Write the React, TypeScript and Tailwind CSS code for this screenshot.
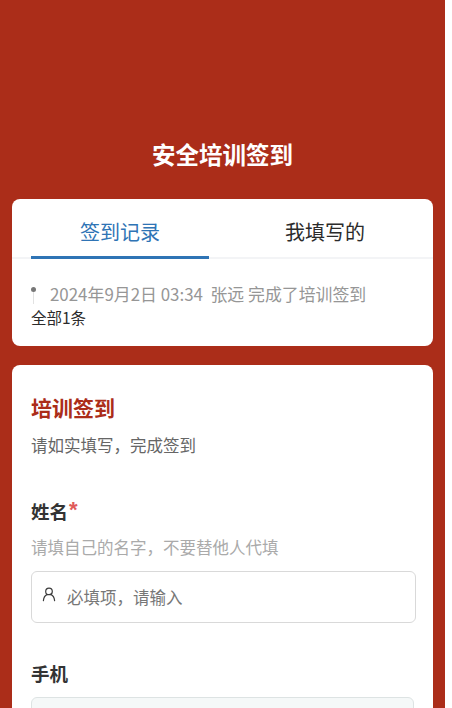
import React from "react";

const font = { fontFamily: '"Noto Sans CJK SC", "Noto Sans", sans-serif' };

function UserIcon() {
  return (
    <svg width="14" height="15" viewBox="0 0 14 15" fill="none" stroke="#3c3c3c" strokeWidth="1.2" strokeLinecap="round">
      <circle cx="7" cy="4.4" r="3.3" />
      <path d="M1.4 13.6c.3-3.2 2-5.4 3.6-6M12.6 13.6c-.3-3.2-2-5.4-3.6-6" />
    </svg>
  );
}

export default function App() {
  return (
    <div className="h-[708px] w-[452px] overflow-hidden bg-white" style={font}>
      <div className="flex h-[708px] w-[445px] flex-col overflow-hidden bg-[#ab2d19] px-3 pt-[136px]">
        <h1 className="h-[36px] text-center text-[23.5px] font-bold leading-[36px] text-white">安全培训签到</h1>

        <section className="mt-[27px] h-[147px] shrink-0 rounded-lg bg-white">
          <div className="flex h-[60px] border-b-2 border-[#f3f4f6] px-[19px]">
            <div className="-mb-[2px] h-[60px] w-[178px] border-b-[3px] border-[#2f74b5] text-center text-[20px] leading-[66px] text-[#2f74b5]">签到记录</div>
            <div className="w-[204px] pl-[28px] text-center text-[20px] leading-[66px] text-[#2b2b2b]">我填写的</div>
          </div>
          <div className="px-[19px] pt-[23px]">
            <div className="flex h-[24px] items-start">
              <div className="relative h-[22px] w-[19px] shrink-0">
                <span className="absolute left-0 top-[5px] h-[5px] w-[5px] rounded-full bg-[#777777]" />
                <span className="absolute left-[2px] top-[10px] h-[12px] w-px bg-[#e2e2e2]" />
              </div>
              <p className="text-[16.9px] leading-[24px] text-[#969696] whitespace-pre">2024年9月2日 03:34  张远 完成了培训签到</p>
            </div>
            <p className="text-[15.5px] leading-[22px] text-[#2b2b2b]">全部1条</p>
          </div>
        </section>

        <section className="mt-[19px] flex-1 rounded-lg bg-white px-[19px] pt-[27px]">
          <h2 className="text-[21px] font-bold leading-[30px] text-[#ab2d19]">培训签到</h2>
          <p className="mt-[11px] text-[16.5px] leading-[24px] text-[#666666]">请如实填写，完成签到</p>

          <div className="mt-[40px] flex h-[28px] items-start">
            <span className="text-[18.5px] font-bold leading-[28px] text-[#333333]">姓名</span>
            <span className="ml-[1px] text-[22px] font-bold leading-[26px] text-[#e05a5a]" style={{ fontFamily: '"Liberation Sans", sans-serif' }}>*</span>
          </div>
          <p className="mt-[10px] text-[16.5px] leading-[24px] text-[#aaaaaa]">请填自己的名字，不要替他人代填</p>
          <div className="mt-[12px] flex h-[52px] w-[385px] items-center rounded-md border border-[#d9d9d9] pl-[10px]">
            <span className="-mt-[6px]"><UserIcon /></span>
            <span className="ml-[11px] text-[16.5px] leading-[24px] text-[#777777]">必填项，请输入</span>
          </div>

          <p className="mt-[36px] text-[18.5px] font-bold leading-[28px] text-[#333333]">手机</p>
          <div className="mt-[10px] h-[52px] w-[383px] rounded-md border border-[#dde3e3] bg-[#f5f8f8]" />
        </section>
      </div>
    </div>
  );
}
